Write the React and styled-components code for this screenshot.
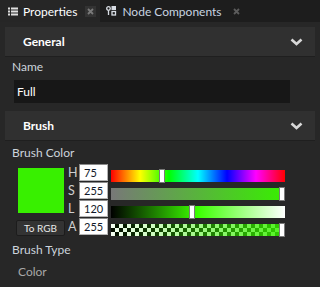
import React from 'react';
import styled, { createGlobalStyle } from 'styled-components';

const GlobalStyle = createGlobalStyle`
  body {
    margin: 0;
    background: #272727;
    font-family: 'Lato', 'Open Sans', sans-serif;
    font-size: 12px;
    color: #d4d8dc;
  }
`;

const Page = styled.div`
  width: 320px;
  height: 287px;
  overflow: hidden;
  background: #272727;
`;

const TabBar = styled.div`
  display: flex;
  height: 22px;
  background: #1d1d1d;
`;

const Tab = styled.div`
  display: flex;
  align-items: center;
  gap: 5px;
  padding: 0 4px 0 ${({ active }) => (active ? 8 : 6)}px;
  background: ${({ active }) => (active ? '#262626' : 'transparent')};
  color: ${({ active }) => (active ? '#ffffff' : '#c8d4e0')};
  font-size: 12px;
`;

const Close = styled.span`
  display: flex;
  align-items: center;
  justify-content: center;
  width: 11px;
  height: 11px;
  margin-left: ${({ active }) => (active ? '3px' : '4px')};
  background: ${({ active }) => (active ? '#333333' : 'transparent')};
`;

const Body = styled.div`
  padding: 5px 5px 0;
`;

const Header = styled.div`
  display: flex;
  align-items: center;
  justify-content: space-between;
  height: 29px;
  padding: 0 12px 0 18px;
  background: #303030;
  border-bottom: 1px solid #1f1f1f;
  color: #ffffff;
  font-weight: 700;
  font-size: 12px;
`;

const Label = styled.div`
  padding-left: 7px;
  line-height: 16px;
  color: #ccd4dc;
  font-size: 12px;
  margin-top: ${({ top }) => top || 0}px;
`;

const TextInput = styled.div`
  margin: 5px 0 0 9px;
  width: 276px;
  height: 23px;
  box-sizing: border-box;
  padding-left: 3px;
  display: flex;
  align-items: center;
  background: #171717;
  color: #ffffff;
  font-size: 12px;
`;

const Section = styled.div`
  margin-top: ${({ top }) => top || 0}px;
`;

const ColorEditor = styled.div`
  display: flex;
  margin: 3px 0 0 11px;
`;

const LeftCol = styled.div`
  display: flex;
  flex-direction: column;
  width: 49px;
  padding-top: 4px;
`;

const Swatch = styled.div`
  width: 46px;
  height: 45px;
  margin-left: 2px;
  background: ${({ color }) => color};
`;

const SmallButton = styled.div`
  margin-top: 7px;
  height: 14px;
  border-radius: 2px;
  background: #333333;
  border: 1px solid #1c1c1c;
  color: #e8e8e8;
  font-size: 10px;
  display: flex;
  align-items: center;
  justify-content: center;
`;

const Rows = styled.div`
  display: flex;
  flex-direction: column;
  margin-left: 3px;
`;

const Row = styled.div`
  display: flex;
  align-items: flex-start;
  height: 18px;
`;

const Letter = styled.div`
  width: 11px;
  padding-top: 2px;
  color: #cfcfcf;
  font-size: 12.5px;
  line-height: 14px;
`;

const NumInput = styled.div`
  width: 29px;
  height: 17px;
  box-sizing: border-box;
  background: #ffffff;
  border: 1px solid #b4b4b4;
  border-top-color: #8a8a8a;
  border-left-color: #8a8a8a;
  color: #101828;
  font-size: 11px;
  padding-left: 4px;
  line-height: 15px;
`;

const Bar = styled.div`
  position: relative;
  margin: 6px 0 0 3px;
  width: 174px;
  height: 12px;
  background: ${({ bg }) => bg};
`;

const Handle = styled.div`
  position: absolute;
  top: -1px;
  width: 4px;
  height: 12px;
  background: #ffffff;
  border: 1px solid #7a7a7a;
`;

const Value = styled.div`
  padding-left: 13px;
  margin-top: 6px;
  line-height: 16px;
  color: #a8a8a8;
  font-size: 12px;
`;

const Chevron = () => (
  <svg width="13" height="8" viewBox="0 0 13 8">
    <path d="M1.5 1.5 L6.5 6 L11.5 1.5" fill="none" stroke="#d8d8d8" strokeWidth="2.6" />
  </svg>
);

const ListIcon = () => (
  <svg width="10" height="9" viewBox="0 0 10 9" fill="#e0e0e0">
    <rect x="0" y="0.5" width="2" height="2" />
    <rect x="3" y="0.5" width="7" height="2" />
    <rect x="0" y="3.5" width="2" height="2" />
    <rect x="3" y="3.5" width="7" height="2" />
    <rect x="0" y="6.5" width="2" height="2" />
    <rect x="3" y="6.5" width="7" height="2" />
  </svg>
);

const NodeIcon = () => (
  <svg width="11" height="10" viewBox="0 0 11 10" fill="none" stroke="#d8dde4">
    <circle cx="2.5" cy="2.5" r="1.8" strokeWidth="1.3" />
    <path d="M2.5 4.5 V9" strokeWidth="1.3" />
    <rect x="6" y="0.5" width="3.5" height="3" fill="#d8dde4" strokeWidth="1" />
    <rect x="6" y="5.5" width="3.5" height="3.5" strokeWidth="1.3" />
  </svg>
);

const CloseIcon = ({ color }) => (
  <svg width="7" height="7" viewBox="0 0 7 7">
    <path d="M1 1 L6 6 M6 1 L1 6" stroke={color} strokeWidth="1.8" />
  </svg>
);

const hue = 106;
const swatch = `hsl(${hue}, 100%, 47%)`;

const checker =
  'repeating-conic-gradient(#000 0 25%, #fff 0 50%) 0 0 / 8px 8px';

const rows = [
  {
    k: 'H',
    v: 75,
    bg: 'linear-gradient(to right, #f00, #ff0 16.7%, #0f0 33.3%, #0ff 50%, #00f 66.7%, #f0f 83.3%, #f00)',
  },
  {
    k: 'S',
    v: 255,
    bg: `linear-gradient(to right, hsl(${hue}, 0%, 47%), ${swatch})`,
  },
  {
    k: 'L',
    v: 120,
    bg: `linear-gradient(to right, #000, hsl(${hue}, 100%, 50%) 50%, #fff)`,
  },
  {
    k: 'A',
    v: 255,
    bg: `linear-gradient(to right, rgba(56,240,0,0.05), rgba(56,240,0,0.88)), ${checker}`,
  },
];

// handle x inside a 174px bar (6px wide handle)
const handleLeft = (v) => Math.max(0, Math.round((v / 255) * 170) - 2);

export default function App() {
  return (
    <Page>
      <GlobalStyle />
      <TabBar>
        <Tab active>
          <ListIcon />
          Properties
          <Close active>
            <CloseIcon color="#7a7a7a" />
          </Close>
        </Tab>
        <Tab>
          <NodeIcon />
          Node Components
          <Close>
            <CloseIcon color="#5c5c5c" />
          </Close>
        </Tab>
      </TabBar>
      <Body>
        <Header>
          General
          <Chevron />
        </Header>
        <Label top={2}>Name</Label>
        <TextInput>Full</TextInput>
        <Section top={8}>
          <Header>
            Brush
            <Chevron />
          </Header>
        </Section>
        <Label top={4}>Brush Color</Label>
        <ColorEditor>
          <LeftCol>
            <Swatch color={swatch} />
            <SmallButton>To RGB</SmallButton>
          </LeftCol>
          <Rows>
            {rows.map((r) => (
              <Row key={r.k}>
                <Letter>{r.k}</Letter>
                <NumInput>{r.v}</NumInput>
                <Bar bg={r.bg}>
                  <Handle style={{ left: handleLeft(r.v) }} />
                </Bar>
              </Row>
            ))}
          </Rows>
        </ColorEditor>
        <Label top={6}>Brush Type</Label>
        <Value>Color</Value>
      </Body>
    </Page>
  );
}
